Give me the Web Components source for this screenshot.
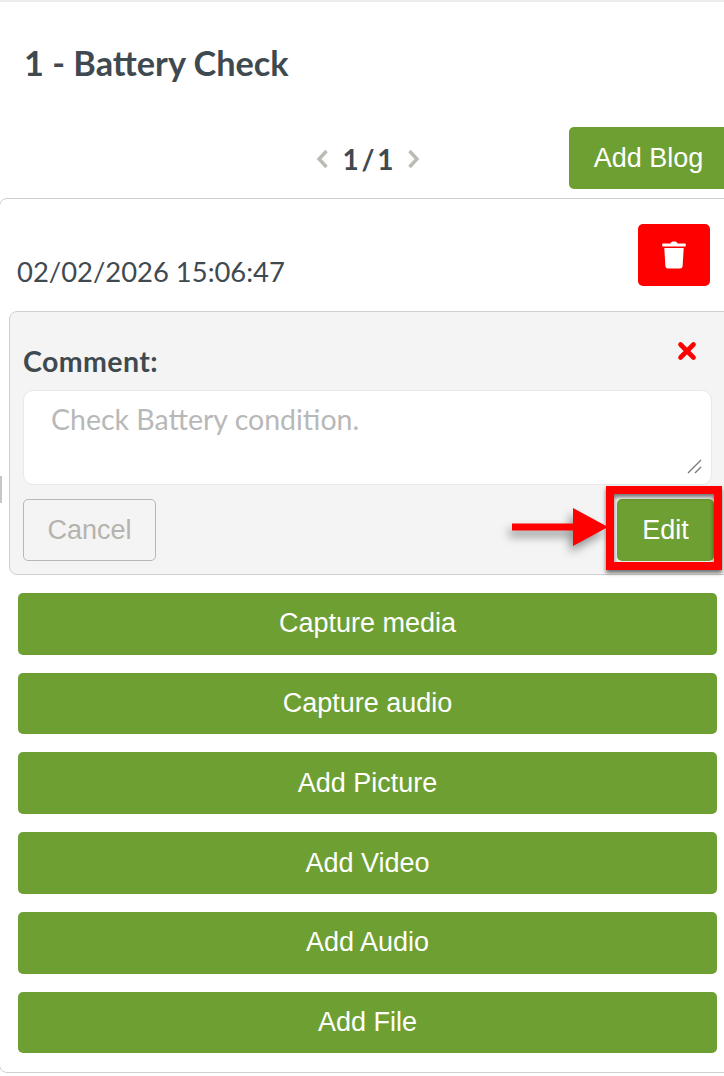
<!DOCTYPE html>
<html lang="en">
<head>
<meta charset="utf-8">
<title>Battery Check</title>
<style>
  html, body { margin: 0; padding: 0; background: #fff; }
  body { width: 724px; height: 1076px; overflow: hidden; font-family: Lato, "Liberation Sans", sans-serif; color: #3f4a50; }
</style>
</head>
<body>
<task-page></task-page>
<script>
class ActionButton extends HTMLElement {
  constructor() {
    super();
    this.attachShadow({ mode: "open" });
    this.shadowRoot.innerHTML = `
      <style>
        :host {
          display: flex;
          align-items: center;
          justify-content: center;
          box-sizing: border-box;
          height: 62px;
          background: #6e9f32;
          color: #fff;
          border-radius: 5px;
          font: 27px/1 "Liberation Sans", Arial, sans-serif;
        }
        :host([tone="cancel"]) {
          background: transparent;
          color: #b5b3ae;
          border: 1px solid #b9b7b3;
        }
        :host([tone="danger"]) { background: #ff0000; }
      </style>
      <slot></slot>
    `;
  }
}
customElements.define("action-button", ActionButton);

class BlogPager extends HTMLElement {
  constructor() {
    super();
    this.attachShadow({ mode: "open" });
    this.shadowRoot.innerHTML = `
      <style>
        :host {
          display: grid;
          grid-template-columns: 155px 1fr 155px;
          align-items: center;
          height: 62px;
        }
        .pager {
          grid-column: 2;
          display: flex;
          align-items: center;
          justify-content: center;
          gap: 13px;
          padding: 2px 0 0 12px;
          font: 700 28px/1 Lato, sans-serif;
          word-spacing: -4px;
          color: #3f4a50;
        }
        svg { width: 13px; height: 20px; fill: none; stroke: #bdbab5; stroke-width: 3.4; }
        action-button { margin-right: -4px; }
      </style>
      <div class="pager">
        <svg viewBox="0 0 13 20"><path d="M10.5 2 3 10l7.5 8"/></svg>
        <span>1 / 1</span>
        <svg viewBox="0 0 13 20"><path d="M2.5 2 10 10l-7.500 8"/></svg>
      </div>
      <action-button>Add Blog</action-button>
    `;
  }
}
customElements.define("blog-pager", BlogPager);

class CommentPanel extends HTMLElement {
  constructor() {
    super();
    this.attachShadow({ mode: "open" });
    this.shadowRoot.innerHTML = `
      <style>
        :host {
          display: block;
          position: relative;
          box-sizing: border-box;
          height: 264px;
          margin-left: 9px;
          margin-right: -3px;
          padding: 34px 13px 0 13px;
          background: #f4f4f4;
          border: 1px solid #cfcfcf;
          border-radius: 8px 0 0 8px;
        }
        .head { display: flex; justify-content: space-between; align-items: flex-start; }
        .label { font: 700 28.500px/30px Lato, sans-serif; letter-spacing: .4px; color: #3f4a50; }
        .close { width: 20px; height: 20px; margin: -5px 19px 0 0; }
        .box {
          position: relative;
          box-sizing: border-box;
          width: 689px;
          height: 95px;
          margin-top: 14px;
          padding: 12px 27px;
          background: #fff;
          border: 1px solid #e8e8e8;
          border-radius: 10px;
          font: 28.500px/32px Lato, sans-serif;
          color: #b8b8b8;
        }
        .grip { position: absolute; right: 9px; bottom: 10px; width: 15px; height: 15px; }
        .actions {
          display: flex;
          justify-content: space-between;
          width: 691px;
          margin-top: 14px;
        }
        .actions action-button { width: 133px; }
        .actions .edit { width: 97px; }
        .highlight {
          position: absolute;
          left: 596px;
          top: 174px;
          box-sizing: border-box;
          width: 116px;
          height: 84px;
          border: 8px solid #ff0000;
          box-shadow: 0 3px 4px rgba(0,0,0,.55), inset 0 3px 4px rgba(0,0,0,.55);
        }
        .arrow {
          position: absolute;
          left: 502px;
          top: 196px;
          width: 96px;
          height: 38px;
          filter: drop-shadow(-3px 6px 5px rgba(0,0,0,.4));
        }
      </style>
      <div class="head">
        <span class="label">Comment:</span>
        <svg class="close" viewBox="0 0 20 20"><path d="M3.5 3.5 16.500 16.500M16.500 3.500 3.500 16.500" stroke="#f00" stroke-width="4.600" stroke-linecap="round"/></svg>
      </div>
      <div class="box">
        Check Battery condition.
        <svg class="grip" viewBox="0 0 15 15"><path d="M1 14 14 1M8 14l6-6" stroke="#777" stroke-width="1.300"/></svg>
      </div>
      <div class="actions">
        <action-button tone="cancel">Cancel</action-button>
        <action-button class="edit">Edit</action-button>
      </div>
      <div class="highlight"></div>
      <svg class="arrow" viewBox="0 0 96 38"><path d="M0 15.500h61V0l35 19-35 19V22.500H0z" fill="#f00"/></svg>
    `;
  }
}
customElements.define("comment-panel", CommentPanel);

class BlogCard extends HTMLElement {
  constructor() {
    super();
    this.attachShadow({ mode: "open" });
    this.shadowRoot.innerHTML = `
      <style>
        :host {
          display: block;
          box-sizing: border-box;
          height: 875px;
          margin: 9px -4px 0 -1px;
          padding-top: 25px;
          border: 1px solid #cfcfcf;
          border-radius: 8px 0 0 8px;
        }
        .top {
          display: flex;
          justify-content: space-between;
          align-items: flex-end;
          height: 62px;
          margin-bottom: 25px;
          padding: 0 17px 0 17px;
        }
        .date { font: 27.400px/28px Lato, sans-serif; color: #3f4a50; }
        .top action-button { width: 72px; }
        svg { width: 24px; height: 28px; }
        .media {
          display: flex;
          flex-direction: column;
          gap: 18px;
          margin: 17.900px 10px 0 18px;
        }
        .media action-button { height: 61.750px; }
      </style>
      <div class="top">
        <span class="date">02/02/2026 15:06:47</span>
        <action-button tone="danger">
          <svg viewBox="0 0 24 28" fill="#fff"><path d="M8.500 2.500C9 1 10 .5 12 .5s3 .5 3.500 2H23a.8.8 0 0 1 .8.8v1.400a.8.8 0 0 1-.8.8H1a.8.8 0 0 1-.8-.8V3.300a.8.8 0 0 1 .8-.8zM2.300 7h19.400l-1.100 18.300a2.500 2.500 0 0 1-2.500 2.200H5.900a2.500 2.500 0 0 1-2.500-2.200z"/></svg>
        </action-button>
      </div>
      <comment-panel></comment-panel>
      <div class="media">
        <action-button>Capture media</action-button>
        <action-button>Capture audio</action-button>
        <action-button>Add Picture</action-button>
        <action-button>Add Video</action-button>
        <action-button>Add Audio</action-button>
        <action-button>Add File</action-button>
      </div>
    `;
  }
}
customElements.define("blog-card", BlogCard);

class TaskPage extends HTMLElement {
  constructor() {
    super();
    this.attachShadow({ mode: "open" });
    this.shadowRoot.innerHTML = `
      <style>
        :host {
          display: block;
          position: relative;
          overflow: hidden;
          height: 1076px;
          border-top: 2px solid #ececec;
          box-sizing: border-box;
        }
        h1 {
          margin: 0;
          padding: 41px 0 0 24px;
          height: 84px;
          box-sizing: border-box;
          font: 700 34.300px/40px Lato, sans-serif;
          color: #3f4a50;
        }
        .spacer { height: 41px; }
        .tick {
          position: absolute;
          left: 0;
          top: 474px;
          width: 2px;
          height: 27px;
          background: #c6c6c6;
        }
      </style>
      <h1>1 - Battery Check</h1>
      <div class="spacer"></div>
      <blog-pager></blog-pager>
      <blog-card></blog-card>
      <div class="tick"></div>
    `;
  }
}
customElements.define("task-page", TaskPage);
</script>
</body>
</html>
